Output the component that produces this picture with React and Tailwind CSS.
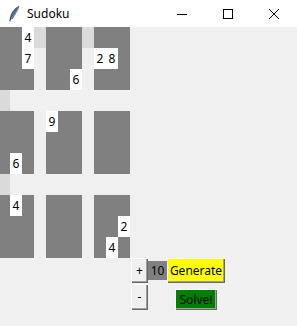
import React from "react";

const FONT = { fontFamily: '"Noto Sans", "Open Sans", sans-serif' };

// board cells: 11 x 11 including the blank separator rows/cols
const DIGITS = {
  "0-2": "4",
  "1-2": "7",
  "2-6": "6",
  "1-8": "2",
  "1-9": "8",
  "4-4": "9",
  "6-1": "6",
  "8-1": "4",
  "9-10": "2",
  "10-9": "4",
};
const SHADED = ["0-3", "0-7", "3-0", "7-0"];
const isGap = (i) => i === 3 || i === 7;

const Cell = ({ r, c }) => {
  const key = `${r}-${c}`;
  if (isGap(r) || isGap(c)) {
    return (
      <div
        className={SHADED.includes(key) ? "bg-[#dadada]" : "bg-[#f0f0f0]"}
      />
    );
  }
  const d = DIGITS[key];
  if (d)
    return (
      <div className="bg-white flex items-center justify-center text-[12px] text-black leading-none">
        {d}
      </div>
    );
  return <div className="bg-[#808080]" />;
};

const Board = () => (
  <div className="grid grid-cols-[10px_repeat(10,12px)] grid-rows-[repeat(11,21px)] w-[130px]">
    {Array.from({ length: 11 }).map((_, r) =>
      Array.from({ length: 11 }).map((_, c) => (
        <Cell key={`${r}-${c}`} r={r} c={c} />
      )),
    )}
  </div>
);

const raised =
  "shadow-[inset_1px_1px_0_#ffffff,inset_-1px_-1px_0_#696969,inset_-2px_-2px_0_#a0a0a0]";

const Feather = () => (
  <svg width="12" height="16" viewBox="0 0 12 16">
    <path d="M11 0.5 C7 2 3.5 6 2.2 12.5 L4.2 12.8 C6.5 9 9.5 5 11 0.5 Z" fill="#4a6a94" stroke="#22344f" strokeWidth="0.7" />
    <path d="M10.5 1.5 C8.5 6 6 9.5 3.2 12.6" stroke="#a9c2e0" strokeWidth="0.6" fill="none" />
    <path d="M2.6 12.4 L1.8 15.4" stroke="#22344f" strokeWidth="1.1" />
  </svg>
);

const TitleBar = () => (
  <div className="h-[27px] bg-white flex items-center text-[12px] text-black">
    <div className="w-[27px] flex justify-center pl-[1px]">
      <Feather />
    </div>
    <span className="flex-1">Sudoku</span>
    <div className="flex items-center">
      <div className="w-[46px] flex justify-center">
        <svg width="10" height="10" viewBox="0 0 10 10">
          <path d="M0 5.5 H10" stroke="#000" strokeWidth="1" />
        </svg>
      </div>
      <div className="w-[46px] flex justify-center">
        <svg width="10" height="10" viewBox="0 0 10 10">
          <rect x="0.5" y="0.5" width="9" height="9" stroke="#000" strokeWidth="1" fill="none" />
        </svg>
      </div>
      <div className="w-[46px] flex justify-center">
        <svg width="10" height="10" viewBox="0 0 10 10">
          <path d="M0 0 L10 10 M10 0 L0 10" stroke="#000" strokeWidth="1" />
        </svg>
      </div>
    </div>
  </div>
);

const Controls = () => (
  <div className="pl-[131px] text-[12px] text-black">
    <div className="flex items-center h-[25px]">
      <button className={`w-[17px] h-[25px] bg-[#f0f0f0] ${raised} leading-none`}>
        +
      </button>
      <div className="w-[19px] h-[19px] bg-[#808080] flex items-center justify-center leading-none">
        10
      </div>
      <button className={`w-[58px] h-[25px] bg-[#ffff00] ${raised} leading-none`}>
        Generate
      </button>
    </div>
    <div className="flex items-start">
      <button className={`w-[17px] h-[26px] mt-[1px] bg-[#f0f0f0] ${raised} leading-none`}>
        -
      </button>
      <button className={`ml-[27px] mt-[6px] w-[42px] h-[21px] bg-[#008000] ${raised} leading-none`}>
        Solve!
      </button>
    </div>
  </div>
);

export default function App() {
  return (
    <div className="w-[297px] h-[326px] bg-[#f0f0f0] overflow-hidden flex flex-col" style={FONT}>
      <TitleBar />
      <Board />
      <Controls />
    </div>
  );
}
